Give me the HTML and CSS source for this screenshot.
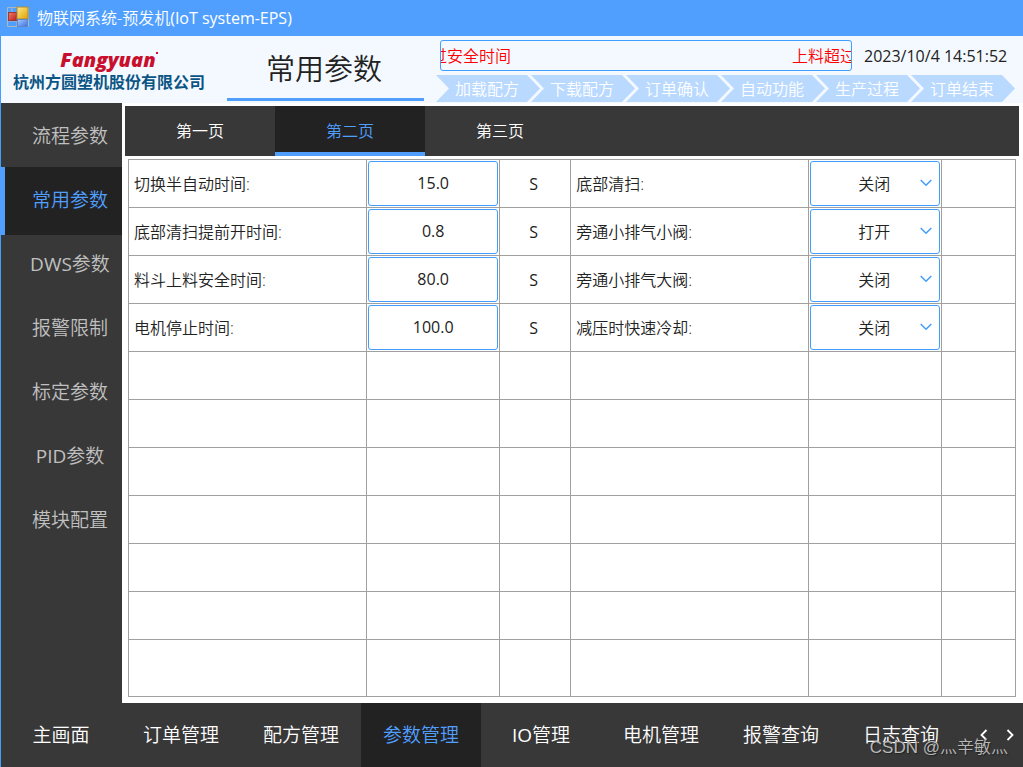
FILE: index.html
```html
<!DOCTYPE html>
<html lang="zh-CN">
<head>
<meta charset="utf-8">
<title>物联网系统-预发机(IoT system-EPS)</title>
<link rel="stylesheet" href="styles.css">
</head>
<body>
<div class="titlebar">
  <svg class="app-icon" width="22" height="22" viewBox="0 0 22 22" aria-hidden="true">
    <defs>
      <linearGradient id="gold" x1="0" y1="0" x2="1" y2="1"><stop offset="0" stop-color="#ffe98a"/><stop offset="1" stop-color="#e0a000"/></linearGradient>
      <linearGradient id="red" x1="0" y1="0" x2="1" y2="1"><stop offset="0" stop-color="#f08070"/><stop offset="1" stop-color="#b81c1c"/></linearGradient>
      <linearGradient id="blue" x1="0" y1="0" x2="1" y2="1"><stop offset="0" stop-color="#a8c8ff"/><stop offset="1" stop-color="#3a70e0"/></linearGradient>
    </defs>
    <path d="M.5 1.500h21v19H.5zM.5 15h9.500v5.500M5 1.500v5" fill="none" stroke="#a9b8bc"/>
    <rect x="1.500" y="6.500" width="8" height="8" fill="url(#red)" stroke="#9c3a3a"/>
    <rect x="10" y="1" width="11" height="12" fill="url(#gold)" stroke="#a58a3c"/>
    <rect x="10.500" y="13.500" width="10" height="7" fill="url(#blue)" stroke="#5f86c8"/>
  </svg>
  <span>物联网系统-预发机<span class="latin">(IoT system-EPS)</span></span>
</div>
<div class="window">
  <header class="header">
    <div class="brand">
      <div class="brand-en">Fangyuan<i class="brand-dot"></i></div>
      <div class="brand-cn">杭州方圆塑机股份有限公司</div>
    </div>
    <h1 class="page-title">常用参数</h1>
    <div class="status">
      <div class="status-top">
        <div class="alarm"><div class="alarm-track"><span>过安全时间</span><span>上料超过</span></div></div>
        <time class="clock">2023/10/4 14:51:52</time>
      </div>
      <ol class="steps">
        <li>加载配方</li><li>下载配方</li><li>订单确认</li><li>自动功能</li><li>生产过程</li><li>订单结束</li>
      </ol>
    </div>
  </header>
  <div class="body">
    <nav class="sidebar">
      <button type="button">流程参数</button>
      <button type="button" class="active">常用参数</button>
      <button type="button"><span class="latin">DWS</span>参数</button>
      <button type="button">报警限制</button>
      <button type="button">标定参数</button>
      <button type="button"><span class="latin">PID</span>参数</button>
      <button type="button">模块配置</button>
    </nav>
    <main class="main">
      <div class="tabs">
        <button type="button">第一页</button>
        <button type="button" class="active">第二页</button>
        <button type="button">第三页</button>
      </div>
      <table class="params">
        <colgroup><col class="c-name"><col class="c-value"><col class="c-unit"><col class="c-name"><col class="c-value"><col></colgroup>
        <tbody>
          <tr>
            <td><label for="v1">切换半自动时间:</label></td>
            <td class="field"><input id="v1" type="text" value="15.0"></td>
            <td class="unit">S</td>
            <td><label for="s1">底部清扫:</label></td>
            <td class="field"><div class="pick"><select id="s1"><option selected>关闭</option><option>打开</option></select><svg width="12" height="8" viewBox="0 0 12 8" aria-hidden="true"><path d="M.7 1 6 6.300 11.300 1"/></svg></div></td>
            <td></td>
          </tr>
          <tr>
            <td><label for="v2">底部清扫提前开时间:</label></td>
            <td class="field"><input id="v2" type="text" value="0.8"></td>
            <td class="unit">S</td>
            <td><label for="s2">旁通小排气小阀:</label></td>
            <td class="field"><div class="pick"><select id="s2"><option>关闭</option><option selected>打开</option></select><svg width="12" height="8" viewBox="0 0 12 8" aria-hidden="true"><path d="M.7 1 6 6.300 11.300 1"/></svg></div></td>
            <td></td>
          </tr>
          <tr>
            <td><label for="v3">料斗上料安全时间:</label></td>
            <td class="field"><input id="v3" type="text" value="80.0"></td>
            <td class="unit">S</td>
            <td><label for="s3">旁通小排气大阀:</label></td>
            <td class="field"><div class="pick"><select id="s3"><option selected>关闭</option><option>打开</option></select><svg width="12" height="8" viewBox="0 0 12 8" aria-hidden="true"><path d="M.7 1 6 6.300 11.300 1"/></svg></div></td>
            <td></td>
          </tr>
          <tr>
            <td><label for="v4">电机停止时间:</label></td>
            <td class="field"><input id="v4" type="text" value="100.0"></td>
            <td class="unit">S</td>
            <td><label for="s4">减压时快速冷却:</label></td>
            <td class="field"><div class="pick"><select id="s4"><option selected>关闭</option><option>打开</option></select><svg width="12" height="8" viewBox="0 0 12 8" aria-hidden="true"><path d="M.7 1 6 6.300 11.300 1"/></svg></div></td>
            <td></td>
          </tr>
          <tr><td></td><td></td><td></td><td></td><td></td><td></td></tr>
          <tr><td></td><td></td><td></td><td></td><td></td><td></td></tr>
          <tr><td></td><td></td><td></td><td></td><td></td><td></td></tr>
          <tr><td></td><td></td><td></td><td></td><td></td><td></td></tr>
          <tr><td></td><td></td><td></td><td></td><td></td><td></td></tr>
          <tr><td></td><td></td><td></td><td></td><td></td><td></td></tr>
          <tr class="last"><td></td><td></td><td></td><td></td><td></td><td></td></tr>
        </tbody>
      </table>
    </main>
  </div>
  <nav class="bottom">
    <button type="button">主画面</button>
    <button type="button">订单管理</button>
    <button type="button">配方管理</button>
    <button type="button" class="active">参数管理</button>
    <button type="button"><span class="latin">IO</span>管理</button>
    <button type="button">电机管理</button>
    <button type="button">报警查询</button>
    <button type="button">日志查询</button>
    <div class="pager">
      <button type="button" aria-label="上一页"><svg width="8" height="12" viewBox="0 0 8 12"><path d="M6.500 1 1.500 6l5 5"/></svg></button>
      <button type="button" aria-label="下一页"><svg width="8" height="12" viewBox="0 0 8 12"><path d="m1.500 1 5 5-5 5"/></svg></button>
    </div>
    <div class="watermark">CSDN @灬辛敏灬</div>
  </nav>
</div>
</body>
</html>
```
FILE: styles.css
```css
* { box-sizing: border-box; }

body {
  margin: 0;
  min-height: 100vh;
  display: flex;
  flex-direction: column;
  background: #fff;
  color: #222;
  font: 350 16px/24px "Open Sans", "Noto Sans CJK SC", sans-serif;
}

button, input, select {
  font: inherit;
  color: inherit;
  border: 0;
  margin: 0;
  padding: 0;
  background: none;
  border-radius: 0;
}

.latin { font-weight: 400; }

.titlebar {
  height: 36px;
  display: flex;
  align-items: center;
  gap: 8px;
  padding: 0 7px;
  background: #509fff;
  color: #fff;
}
.app-icon { margin-bottom: 2px; }

.window {
  flex: 1;
  display: flex;
  flex-direction: column;
  border-left: 1px solid #409eff;
}

.header {
  height: 67px;
  display: flex;
  background: #f4f9ff;
}

.brand {
  width: 226px;
  padding: 12px 22px 0 12px;
  white-space: nowrap;
}
.brand-en {
  display: flex;
  justify-content: center;
  font: italic 800 20px/24px "Open Sans", sans-serif;
  color: #c8102e;
}
.brand-dot {
  width: 2px;
  height: 2px;
  margin-top: 4px;
  background: #c8102e;
}
.brand-cn {
  display: flex;
  justify-content: center;
  font-weight: 700;
  line-height: 20px;
  color: #0b5585;
}

.page-title {
  width: 197px;
  height: 65px;
  margin: 0;
  padding-right: 3px;
  border-bottom: 3px solid #509fff;
  font-size: 29px;
  font-weight: 350;
  line-height: 66px;
  text-align: center;
}

.status {
  flex: 1;
  min-width: 0;
  display: flex;
  flex-direction: column;
  gap: 4px;
  padding: 4px 8px 0 12px;
}
.status-top {
  display: flex;
  gap: 12px;
  padding-left: 4px;
}
.alarm {
  flex: 1;
  height: 31px;
  border: 1px solid #409eff;
  border-radius: 3px;
  overflow: hidden;
}
.alarm-track {
  display: flex;
  justify-content: space-between;
  margin: 0 -5px 0 -10px;
  line-height: 30px;
  color: #f00;
  white-space: nowrap;
}
.clock {
  width: 151px;
  height: 31px;
  font-weight: 400;
  line-height: 33px;
  white-space: nowrap;
}

.steps {
  display: flex;
  margin: 0;
  padding: 0 0 0 9px;
  list-style: none;
}
.steps li {
  flex: 1;
  height: 27px;
  margin-left: -9px;
  padding-right: 2px;
  background: #b9d9ff;
  clip-path: polygon(0 0, calc(100% - 13px) 0, 100% 50%, calc(100% - 13px) 100%, 0 100%, 13px 50%);
  color: #fff;
  line-height: 28px;
  text-align: center;
  white-space: nowrap;
}

.body { flex: 1; display: flex; }

.sidebar {
  width: 121px;
  display: flex;
  flex-direction: column;
  background: #383838;
}
.sidebar button {
  height: 64px;
  padding: 1px 0 0 17px;
  color: #c0c0c0;
  font-size: 19px;
}
.sidebar .active {
  height: 68px;
  margin: 0 0 -4px -1px;
  padding: 0 0 3px 13px;
  border-left: 5px solid #509fff;
  background: #222;
  color: #509fff;
}

.main {
  flex: 1;
  min-width: 0;
  padding: 3px 4px 3px 3px;
}
.tabs {
  display: flex;
  height: 50px;
  background: #383838;
  color: #fff;
}
.tabs button { width: 150px; }
.tabs .active {
  padding-top: 4px;
  border-bottom: 4px solid #509fff;
  background: #222;
  color: #509fff;
}

.params {
  width: calc(100% - 6px);
  margin: 3px;
  table-layout: fixed;
  border-collapse: collapse;
}
.params td {
  height: 48px;
  padding: 0 5px;
  border: 1px solid #a0a0a0;
}
.params .last td { height: 57px; }
.c-name { width: 26.85%; }
.c-value { width: 15%; }
.c-unit { width: 8%; }
.params .unit { padding: 0 3px 0 0; text-align: center; font-weight: 400; }
.params .field { padding: 1px; }
.field input,
.field select {
  display: block;
  width: 100%;
  height: 45px;
  border: 1px solid #409eff;
  border-radius: 3px;
  text-align: center;
}
.field input { padding-bottom: 2px; font-weight: 400; }
.pick { position: relative; }
.field select {
  appearance: none;
  background: #fff;
  text-align-last: center;
  padding-right: 2px;
}
.pick svg {
  position: absolute;
  right: 8px;
  top: 18px;
  pointer-events: none;
}
.pick path { fill: none; stroke: #409eff; stroke-width: 1.5; }

.bottom {
  position: relative;
  display: flex;
  height: 64px;
  background: #383838;
  color: #fff;
}
.bottom > button {
  width: 120px;
  font-size: 19px;
}
.bottom > .active { background: #222; color: #509fff; }
.pager {
  flex: 1;
  display: flex;
  align-items: center;
  justify-content: flex-end;
  gap: 10px;
  padding-right: 5px;
}
.pager button { width: 16px; height: 24px; }
.pager svg { display: block; margin: 0 auto; }
.pager path { fill: none; stroke: #fff; stroke-width: 1.8; }
.watermark {
  position: absolute;
  right: 15px;
  bottom: 7px;
  font-family: "Liberation Sans", "Noto Sans CJK SC", sans-serif;
  font-size: 17px;
  color: #b8b8b8;
  text-shadow: 1px 1px 1px #222;
  pointer-events: none;
}
```
